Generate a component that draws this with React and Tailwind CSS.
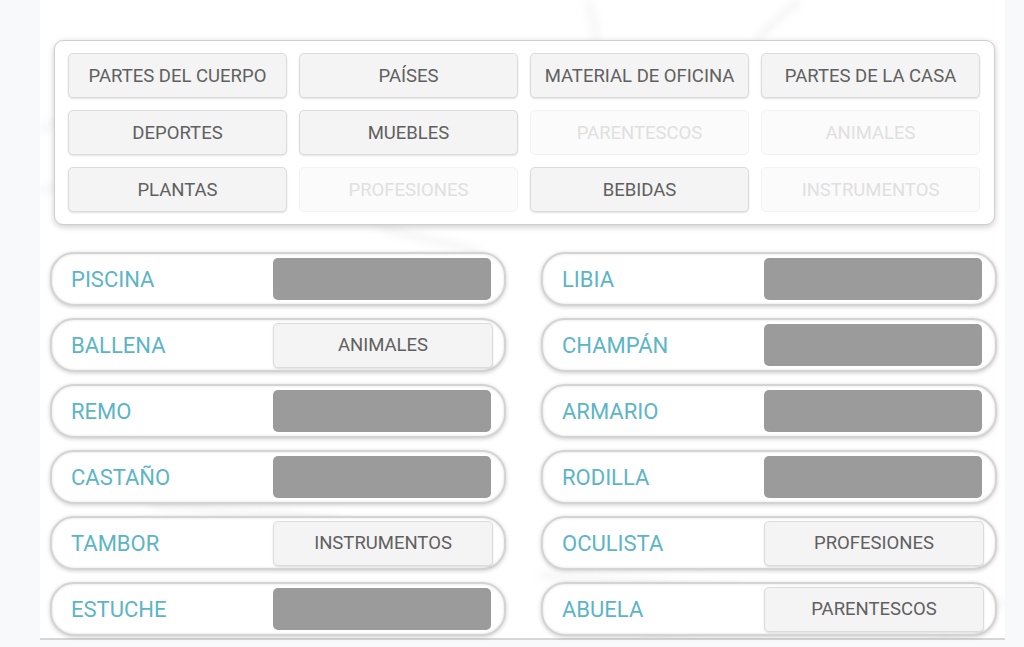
import React from "react";

const topButtons = [
  ["PARTES DEL CUERPO", true],
  ["PAÍSES", true],
  ["MATERIAL DE OFICINA", true],
  ["PARTES DE LA CASA", true],
  ["DEPORTES", true],
  ["MUEBLES", true],
  ["PARENTESCOS", false],
  ["ANIMALES", false],
  ["PLANTAS", true],
  ["PROFESIONES", false],
  ["BEBIDAS", true],
  ["INSTRUMENTOS", false],
];

const left = [
  ["PISCINA", null],
  ["BALLENA", "ANIMALES"],
  ["REMO", null],
  ["CASTAÑO", null],
  ["TAMBOR", "INSTRUMENTOS"],
  ["ESTUCHE", null],
];
const right = [
  ["LIBIA", null],
  ["CHAMPÁN", null],
  ["ARMARIO", null],
  ["RODILLA", null],
  ["OCULISTA", "PROFESIONES"],
  ["ABUELA", "PARENTESCOS"],
];

function Row({ label, answer }) {
  return (
    <div className="h-[54px] w-[456px] rounded-[24px] border-2 border-[#d4d4d4] bg-white shadow-[0_1px_4px_rgba(0,0,0,0.2),inset_0_0_3px_rgba(0,0,0,0.12)] flex items-center pl-[19px] pr-[11px]">
      <span className="text-[22px] text-[#5cb5c7] leading-none flex-1 pt-[2px]">{label}</span>
      {answer ? (
        <div className="w-[220px] h-[45px] rounded-[5px] border border-[#dcdcdc] bg-[#f4f4f4] shadow-[0_1px_2px_rgba(0,0,0,0.12)] flex items-center justify-center text-[18.5px] text-[#606060] pt-[2px]">
          {answer}
        </div>
      ) : (
        <div className="w-[218px] h-[42px] rounded-[5px] bg-[#9b9b9b] mr-[2px]" />
      )}
    </div>
  );
}

export default function App() {
  return (
    <div className="w-[1024px] h-[647px] bg-[#f7f9fb] overflow-hidden" style={{ fontFamily: "Roboto, 'Liberation Sans', sans-serif" }}>
      <div className="relative ml-[40px] w-[965px] h-[640px] bg-white border-b-2 border-[#d6d6d6] pt-[40px]">
        <svg className="absolute inset-0 pointer-events-none" width="965" height="640" viewBox="0 0 965 640">
          <defs>
            <filter id="b" x="-20%" y="-20%" width="140%" height="140%">
              <feGaussianBlur stdDeviation="5" />
            </filter>
          </defs>
          <g filter="url(#b)" fill="none" stroke="#d6d6d6" strokeWidth="3" opacity="0.6">
            <path d="M548 0 C555 20 556 35 556 45" />
            <path d="M760 0 C735 20 720 35 715 45" />
            <path d="M0 190 C30 185 60 178 90 170" />
            <path d="M0 130 C20 120 40 110 60 100" />
            <path d="M340 228 C380 238 420 245 440 252" />
            <path d="M110 505 C180 510 260 515 300 520" />
            <path d="M500 575 C560 580 620 585 700 590" />
            <path d="M600 638 C680 625 760 615 860 600" />
            <path d="M900 636 C920 625 940 615 965 600" />
          </g>
        </svg>
        <div className="relative ml-[14px] w-[941px] h-[185px] rounded-[9px] bg-white border border-[#cfcfcf] shadow-[0_2px_6px_rgba(0,0,0,0.2)] pt-[12px] pl-[13px]">
          <div className="grid grid-cols-[219px_219px_219px_219px] gap-x-[12px] gap-y-[12px]">
            {topButtons.map(([t, on]) =>
              on ? (
                <div key={t} className="h-[45px] rounded-[5px] border border-[#dcdcdc] bg-[#f4f4f4] shadow-[0_1px_2px_rgba(0,0,0,0.12)] flex items-center justify-center text-[18.5px] text-[#606060] pt-[2px]">
                  {t}
                </div>
              ) : (
                <div key={t} className="h-[45px] rounded-[5px] border border-[#f2f2f2] bg-[#fbfbfb] flex items-center justify-center text-[18.5px] text-[#e0e0e0] pt-[2px]">
                  {t}
                </div>
              )
            )}
          </div>
        </div>
        <div className="relative ml-[10px] mt-[27px] grid grid-cols-[456px_456px] gap-x-[35px]">
          <div className="flex flex-col gap-[12px]">
            {left.map(([l, a]) => (
              <Row key={l} label={l} answer={a} />
            ))}
          </div>
          <div className="flex flex-col gap-[12px]">
            {right.map(([l, a]) => (
              <Row key={l} label={l} answer={a} />
            ))}
          </div>
        </div>
      </div>
    </div>
  );
}
